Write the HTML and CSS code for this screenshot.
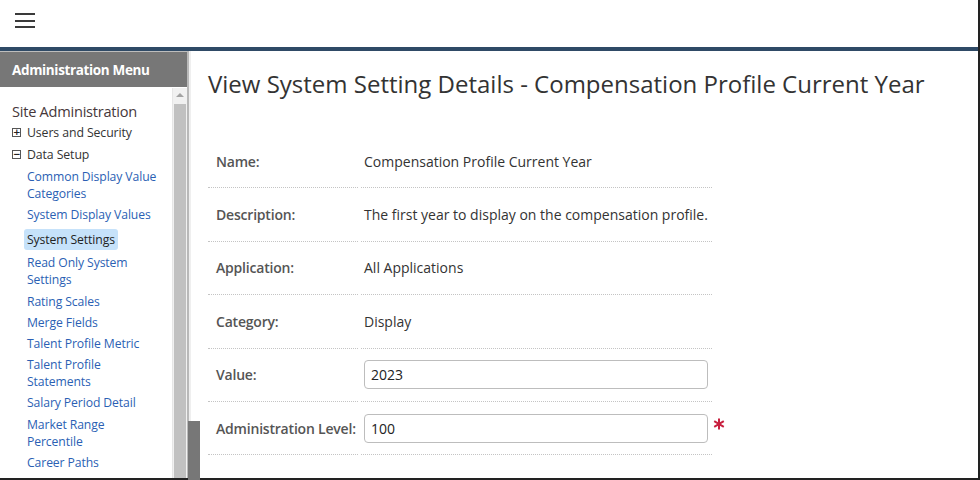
FILE: index.html
```html
<!DOCTYPE html>
<html lang="en">
<head>
<meta charset="utf-8">
<title>View System Setting Details</title>
<link rel="stylesheet" href="styles.css">
</head>
<body>
<div class="frame">
  <header class="topbar">
    <button class="burger" aria-label="Menu"><span></span><span></span><span></span></button>
  </header>
  <div class="accent"></div>
  <div class="layout">
    <aside class="sidebar">
      <div class="side-head">Administration Menu</div>
      <div class="side-body">
        <nav class="nav">
          <div class="nav-title">Site Administration</div>
          <div class="tree-item"><span class="box">+</span>Users and Security</div>
          <div class="tree-item"><span class="box">&minus;</span>Data Setup</div>
          <ul class="links">
            <li><a>Common Display Value Categories</a></li>
            <li><a>System Display Values</a></li>
            <li class="active"><a>System Settings</a></li>
            <li><a>Read Only System Settings</a></li>
            <li><a>Rating Scales</a></li>
            <li><a>Merge Fields</a></li>
            <li><a>Talent Profile Metric</a></li>
            <li><a>Talent Profile Statements</a></li>
            <li><a>Salary Period Detail</a></li>
            <li><a>Market Range Percentile</a></li>
            <li><a>Career Paths</a></li>
          </ul>
        </nav>
        <div class="scrollbar">
          <div class="sb-arrow"></div>
          <div class="sb-thumb"></div>
        </div>
      </div>
    </aside>
    <main class="content">
      <h1 class="title">View System Setting Details - Compensation Profile Current Year</h1>
      <div class="details">
        <div class="label">Name:</div>
        <div class="value">Compensation Profile Current Year</div>
        <div class="label">Description:</div>
        <div class="value">The first year to display on the compensation profile.</div>
        <div class="label">Application:</div>
        <div class="value">All Applications</div>
        <div class="label">Category:</div>
        <div class="value">Display</div>
        <div class="label">Value:</div>
        <div class="value"><input class="field" type="text" value="2023"></div>
        <div class="label">Administration Level:</div>
        <div class="value"><input class="field" type="text" value="100"><svg class="req" width="12" height="12" viewBox="0 0 12 12"><path d="M6 0.5V11.5M1.2 3.2L10.8 8.8M10.8 3.2L1.2 8.8" stroke="#c8203f" stroke-width="2"/></svg></div>
      </div>
    </main>
    <div class="splitter"></div>
  </div>
</div>
</body>
</html>
```
FILE: styles.css
```css
* { box-sizing: border-box; }
html, body { margin: 0; padding: 0; }
body {
  width: 980px;
  height: 480px;
  overflow: hidden;
  font-family: "Open Sans", "Noto Sans", sans-serif;
  background: #fff;
}
.frame {
  width: 980px;
  height: 480px;
  border-right: 2px solid #222;
  border-bottom: 2px solid #222;
  display: flex;
  flex-direction: column;
}
.topbar {
  height: 47px;
  display: flex;
  align-items: flex-start;
  padding: 13px 0 0 15px;
}
.burger {
  border: 0;
  background: none;
  padding: 0;
  width: 20px;
  height: 15px;
  display: flex;
  flex-direction: column;
  justify-content: space-between;
}
.burger span {
  display: block;
  height: 2px;
  background: #3a3a3a;
}
.accent {
  height: 4px;
  background: #2f4a66;
}
.layout {
  flex: 1;
  display: flex;
  position: relative;
  min-height: 0;
}
.sidebar {
  width: 189px;
  border-right: 2px solid #b9b9b9;
  display: flex;
  flex-direction: column;
}
.side-head {
  height: 36px;
  background: #777;
  border-top: 1px solid #bdbdbd;
  color: #fff;
  font-weight: 700;
  font-size: 13.5px;
  padding: 0 0 0 12px;
  display: flex;
  align-items: center;
  letter-spacing: -0.35px;
}
.side-body {
  flex: 1;
  display: flex;
  min-height: 0;
  padding-top: 1px;
}
.nav {
  flex: 1;
  padding: 13px 12px 0 12px;
  overflow: hidden;
}
.nav-title {
  font-size: 14.6px;
  line-height: 20px;
  color: #46373a;
  margin-bottom: 3px;
  letter-spacing: -0.25px;
}
.tree-item {
  font-size: 12.3px;
  line-height: 17px;
  color: #333;
  margin-bottom: 5px;
  display: flex;
  align-items: center;
  letter-spacing: -0.1px;
  white-space: nowrap;
}
.box {
  width: 9px;
  height: 9px;
  border: 1px solid #555;
  font-size: 9px;
  line-height: 7px;
  text-align: center;
  margin-right: 6px;
  color: #222;
  font-family: "DejaVu Sans", sans-serif;
  font-weight: 700;
}
.links {
  list-style: none;
  margin: 0;
  padding: 0 0 0 15px;
}
.links li {
  font-size: 12.2px;
  line-height: 17px;
  margin-bottom: 4.2px;
  letter-spacing: -0.1px;
}
.links a {
  color: #2b5fb4;
  display: inline-block;
}
.links li.active {
  margin-top: 6px;
}
.links li.active a {
  background: #c6e2fa;
  color: #222;
  padding: 2px 3px;
  margin-left: -3px;
  border-radius: 3px;
}
.scrollbar {
  width: 15px;
  background: #f1f1f1;
  border-left: 1px solid #e6e6e6;
  display: flex;
  flex-direction: column;
  align-items: center;
  padding-top: 5px;
}
.sb-arrow {
  width: 0;
  height: 0;
  border-left: 4px solid transparent;
  border-right: 4px solid transparent;
  border-bottom: 4px solid #a3a3a3;
  margin-bottom: 7px;
}
.sb-thumb {
  flex: 1;
  width: 12px;
  background: #c1c1c1;
}
.content {
  flex: 1;
  border-left: 2px solid #efefef;
  padding: 16px 0 0 17px;
}
.title {
  margin: 0 0 34px;
  font-size: 24px;
  line-height: 34px;
  font-weight: 400;
  color: #333;
  white-space: nowrap;
}
.details {
  display: grid;
  grid-template-columns: 150px 351px;
  column-gap: 3px;
  grid-auto-rows: 53.4px;
}
.label, .value {
  border-bottom: 1px dotted #c4c4c4;
  display: flex;
  align-items: center;
  font-size: 14px;
}
.label {
  padding-left: 8px;
  color: #555;
  font-weight: 600;
  letter-spacing: -0.2px;
}
.value {
  padding-left: 3px;
  color: #333;
  position: relative;
}
.field {
  width: 344px;
  height: 29px;
  border: 1px solid #bdbdbd;
  border-radius: 4px;
  padding: 0 6px;
  font-family: "Open Sans", "Noto Sans", sans-serif;
  font-size: 14px;
  color: #222;
}
.req {
  position: absolute;
  left: 352px;
  top: 16px;
}
.splitter {
  position: absolute;
  left: 188px;
  top: 370px;
  width: 12px;
  height: 60px;
  background: #777;
}
```
